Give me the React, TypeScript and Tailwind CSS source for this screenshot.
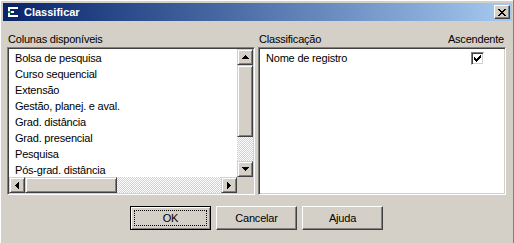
const raised =
  'border border-t-[#d4d0c8] border-l-[#d4d0c8] border-r-[#404040] border-b-[#404040] shadow-[inset_1px_1px_#ffffff,inset_-1px_-1px_#808080] bg-[#d4d0c8]'
const sunken =
  'border border-t-[#808080] border-l-[#808080] border-r-white border-b-white shadow-[inset_1px_1px_#404040,inset_-1px_-1px_#d4d0c8] p-px'
const checker =
  'bg-[image:repeating-conic-gradient(#d4d0c8_0_25%,#ffffff_0_50%)] bg-[length:2px_2px]'

const ITEMS = [
  'Bolsa de pesquisa',
  'Curso sequencial',
  'Extensão',
  'Gestão, planej. e aval.',
  'Grad. distância',
  'Grad. presencial',
  'Pesquisa',
  'Pós-grad. distância',
]

type Dir = 'up' | 'down' | 'left' | 'right'

const ARROWS: Record<Dir, { w: number; h: number; r: number[][] }> = {
  up: { w: 7, h: 4, r: [[3, 0, 1, 1], [2, 1, 3, 1], [1, 2, 5, 1], [0, 3, 7, 1]] },
  down: { w: 7, h: 4, r: [[0, 0, 7, 1], [1, 1, 5, 1], [2, 2, 3, 1], [3, 3, 1, 1]] },
  left: { w: 4, h: 7, r: [[0, 3, 1, 1], [1, 2, 1, 3], [2, 1, 1, 5], [3, 0, 1, 7]] },
  right: { w: 4, h: 7, r: [[0, 0, 1, 7], [1, 1, 1, 5], [2, 2, 1, 3], [3, 3, 1, 1]] },
}

function ScrollBtn({ dir }: { dir: Dir }) {
  const a = ARROWS[dir]
  return (
    <div className={`w-4 h-4 shrink-0 flex items-center justify-center ${raised}`}>
      <svg width={a.w} height={a.h} shapeRendering="crispEdges">
        {a.r.map((r, i) => (
          <rect key={i} x={r[0]} y={r[1]} width={r[2]} height={r[3]} fill="#000" />
        ))}
      </svg>
    </div>
  )
}

function CheckBox() {
  const px = [
    [6, 0], [5, 1], [6, 1], [0, 2], [4, 2], [5, 2], [6, 2], [0, 3], [1, 3], [3, 3], [4, 3], [5, 3],
    [0, 4], [1, 4], [2, 4], [3, 4], [4, 4], [1, 5], [2, 5], [3, 5], [2, 6],
  ]
  return (
    <div className="w-[13px] h-[13px] bg-white border border-t-[#808080] border-l-[#808080] border-r-white border-b-white shadow-[inset_1px_1px_#404040,inset_-1px_-1px_#d4d0c8] flex items-center justify-center">
      <svg width="7" height="7" shapeRendering="crispEdges">
        {px.map(([x, y], i) => (
          <rect key={i} x={x} y={y} width="1" height="1" fill="#000" />
        ))}
      </svg>
    </div>
  )
}

function Button({ label, primary }: { label: string; primary?: boolean }) {
  if (primary) {
    return (
      <div className="w-[81px] h-[24px] flex border border-black bg-[#d4d0c8] shadow-[inset_1px_1px_#ffffff,inset_-1px_-1px_#808080]">
        <div className="flex-1 m-[3px] border border-dotted border-black flex items-center justify-center">
          {label}
        </div>
      </div>
    )
  }
  return (
    <div className="w-[81px] h-[24px] flex items-center justify-center border border-t-white border-l-white border-r-[#404040] border-b-[#404040] bg-[#d4d0c8] shadow-[inset_-1px_-1px_#808080]">
      {label}
    </div>
  )
}

export default function App() {
  return (
    <div className="w-[514px] h-[243px] overflow-hidden bg-[#d4d0c8] pt-[3px] pl-[3px] pr-px border-r border-r-[#808080] shadow-[inset_1px_1px_#ffffff] font-['Liberation_Sans',Arial,sans-serif] text-[11px] tracking-[-0.2px] text-black">
      {/* barra de título */}
      <div className="h-[18px] flex items-center pl-[2px] pr-[2px] bg-linear-to-r from-[#0a246a] to-[#a6caf0]">
        <svg width="16" height="16" shapeRendering="crispEdges" className="shrink-0">
          <rect x="1" y="1" width="14" height="13" fill="#0a246a" />
          <rect x="3" y="3" width="10" height="2" fill="#ffffff" />
          <rect x="3" y="3" width="2" height="9" fill="#ffffff" />
          <rect x="3" y="7" width="3" height="2" fill="#1f9a3a" />
          <rect x="6" y="7" width="3" height="2" fill="#ffffff" />
          <rect x="3" y="11" width="10" height="2" fill="#ffffff" />
        </svg>
        <span className="ml-[3px] text-white font-bold tracking-normal leading-none">Classificar</span>
        <div className="ml-auto w-4 h-[14px] flex items-center justify-center border border-t-white border-l-white border-r-[#404040] border-b-[#404040] bg-[#d4d0c8] shadow-[inset_-1px_-1px_#808080]">
          <svg width="8" height="7" shapeRendering="crispEdges">
            <path d="M0 0h2l2 2.5 2-2.5h2L5 3.5 8 7H6L4 4.5 2 7H0l3-3.5z" fill="#000" />
          </svg>
        </div>
      </div>

      <div className="pl-[4px] pr-[6px]">
        <div className="grid grid-cols-2 gap-[3px]">
          {/* colunas disponíveis */}
          <div>
            <div className="h-[26px] flex items-end pb-px pl-px leading-[14px]">Colunas disponíveis</div>
            <div className={`h-[148px] bg-white flex flex-col ${sunken}`}>
              <div className="flex flex-1 min-h-0">
                <div className="flex-1 overflow-hidden pt-px">
                  {ITEMS.map(it => (
                    <div key={it} className="h-4 leading-4 pl-[6px] whitespace-nowrap">{it}</div>
                  ))}
                </div>
                <div className="w-4 flex flex-col">
                  <ScrollBtn dir="up" />
                  <div className={`h-[72px] ${raised}`} />
                  <div className={`flex-1 ${checker}`} />
                  <ScrollBtn dir="down" />
                </div>
              </div>
              <div className="flex h-4">
                <ScrollBtn dir="left" />
                <div className={`w-[92px] ${raised}`} />
                <div className={`flex-1 ${checker}`} />
                <ScrollBtn dir="right" />
                <div className="w-4 bg-[#d4d0c8]" />
              </div>
            </div>
          </div>

          {/* classificação */}
          <div>
            <div className="h-[26px] flex items-end justify-between pb-px pl-px pr-[2px] leading-[14px]">
              <span>Classificação</span>
              <span>Ascendente</span>
            </div>
            <div className={`h-[148px] bg-white ${sunken}`}>
              <div className="pt-px">
                <div className="h-4 flex items-center justify-between pl-[6px] pr-[20px]">
                  <span className="leading-4">Nome de registro</span>
                  <CheckBox />
                </div>
              </div>
            </div>
          </div>
        </div>

        <div className="mt-[11px] flex justify-center gap-[5px]">
          <Button label="OK" primary />
          <Button label="Cancelar" />
          <Button label="Ajuda" />
        </div>
      </div>
    </div>
  )
}
